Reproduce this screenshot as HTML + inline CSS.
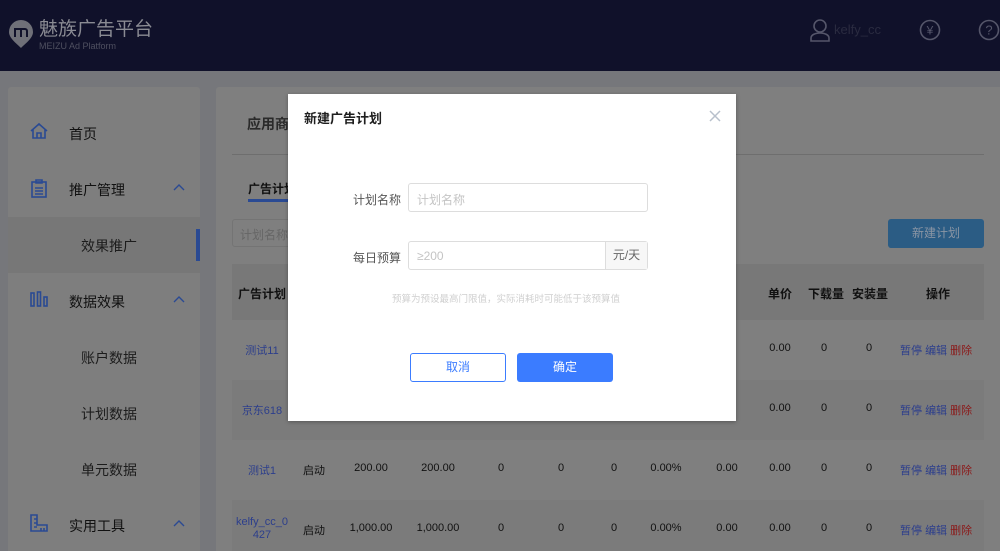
<!DOCTYPE html>
<html style="width:1000px;height:551px;overflow:hidden"><head><meta charset="utf-8"><style>
*{margin:0;padding:0;box-sizing:border-box}
body{width:1000px;height:551px;overflow:hidden;position:relative;background:#76777b;font-family:"Liberation Sans","Noto Sans CJK SC",sans-serif;color:#111}
.a{position:absolute}
.hdr{left:0;top:0;width:1000px;height:71px;background:#10112a}
.side{left:8px;top:87px;width:192px;height:464px;background:#7e7e7e;border-radius:3px 3px 0 0}
.main{left:216px;top:87px;width:784px;height:464px;background:#7f7f7f;border-radius:3px 0 0 0}
.nav{font-size:14px;color:#111}
.sub{font-size:14px;color:#1c1c1c}
.td{font-size:11px;color:#111;text-align:center;position:absolute}
.lk{color:#2c3e8c}
.modal{left:288px;top:94px;width:448px;height:327px;background:#fff;box-shadow:0 1px 4px rgba(0,0,0,.3)}
</style></head><body>
<div class="a hdr"></div>
<svg class="a" style="left:8px;top:19px" width="26" height="30" viewBox="0 0 26 30"><path d="M13 1a12 12 0 0 1 12 12c0 6-7 11-12 16C8 24 1 19 1 13A12 12 0 0 1 13 1z" fill="#6f7078"/><path d="M7 18v-8h10a2 2 0 0 1 2 2v6M13 10v8" stroke="#10112a" stroke-width="2" fill="none"/></svg>
<div class="a" style="left:39px;top:19px;font-size:19px;line-height:22px;color:#8a8b93">魅族广告平台</div>
<div class="a" style="left:39px;top:41px;font-size:9px;line-height:10px;color:#4f5060">MEIZU Ad Platform</div>
<svg class="a" style="left:809px;top:18px" width="22" height="24" viewBox="0 0 22 24" fill="none" stroke="#55566a" stroke-width="1.6"><circle cx="11" cy="8" r="6"/><path d="M2 23v-3c0-3 4-5 9-5s9 2 9 5v3z"/></svg>
<div class="a" style="left:834px;top:22px;font-size:13px;line-height:15px;color:#2a2b40">kelfy_cc</div>
<svg class="a" style="left:919px;top:19px" width="22" height="22"><circle cx="11" cy="11" r="9.5" fill="none" stroke="#55566a" stroke-width="1.6"/><text x="11" y="15.5" text-anchor="middle" font-size="12" fill="#55566a" font-family="Liberation Sans">¥</text></svg>
<svg class="a" style="left:978px;top:19px" width="22" height="22"><circle cx="11" cy="11" r="9.5" fill="none" stroke="#55566a" stroke-width="1.6"/><text x="11" y="15.5" text-anchor="middle" font-size="13" fill="#55566a" font-family="Liberation Sans">?</text></svg>

<div class="a side"></div>
<svg class="a" style="left:30px;top:122px" width="18" height="18" viewBox="0 0 18 18" fill="none" stroke="#2a4a93" stroke-width="1.6"><path d="M1 9L9 2l8 7M3 7v9h12V7M7 16v-5h4v5"/></svg>
<div class="a nav" style="left:69px;top:124px">首页</div>
<svg class="a" style="left:30px;top:179px" width="18" height="19" viewBox="0 0 18 19" fill="none" stroke="#2a4a93" stroke-width="1.6"><rect x="2" y="3" width="14" height="15"/><path d="M6 1h6v3H6zM5 9h8M5 12h8M5 15h8"/></svg>
<div class="a nav" style="left:69px;top:180px">推广管理</div>
<svg class="a" style="left:173px;top:184px" width="12" height="7" fill="none" stroke="#2a4a93" stroke-width="1.4"><path d="M1 6l5-5 5 5"/></svg>
<div class="a" style="left:8px;top:217px;width:192px;height:56px;background:#777"></div>
<div class="a" style="left:196px;top:229px;width:4px;height:32px;background:#2a4a93"></div>
<div class="a sub" style="left:81px;top:236px">效果推广</div>
<svg class="a" style="left:30px;top:291px" width="18" height="16" fill="none" stroke="#2a4a93" stroke-width="1.6"><rect x="1" y="2" width="3" height="13"/><rect x="7.5" y="1" width="3" height="14"/><rect x="14" y="6" width="3" height="9"/></svg>
<div class="a nav" style="left:69px;top:292px">数据效果</div>
<svg class="a" style="left:173px;top:296px" width="12" height="7" fill="none" stroke="#2a4a93" stroke-width="1.4"><path d="M1 6l5-5 5 5"/></svg>
<div class="a sub" style="left:81px;top:348px">账户数据</div>
<div class="a sub" style="left:81px;top:404px">计划数据</div>
<div class="a sub" style="left:81px;top:460px">单元数据</div>
<svg class="a" style="left:30px;top:514px" width="18" height="18" fill="none" stroke="#2a4a93" stroke-width="1.6"><path d="M1 1v16h16v-6H7V1zM4 5h3M4 9h3M4 13h3M11 14v3M14 14v3"/></svg>
<div class="a nav" style="left:69px;top:516px">实用工具</div>
<svg class="a" style="left:173px;top:520px" width="12" height="7" fill="none" stroke="#2a4a93" stroke-width="1.4"><path d="M1 6l5-5 5 5"/></svg>

<div class="a main"></div>
<div class="a" style="left:247px;top:114px;font-size:14px;font-weight:bold;color:#2a2a2a">应用商店</div>
<div class="a" style="left:232px;top:154px;width:752px;height:1px;background:#6e6e6e"></div>
<div class="a" style="left:248px;top:180px;font-size:12px;font-weight:bold">广告计划</div>
<div class="a" style="left:248px;top:199px;width:45px;height:3px;background:#2a4a93"></div>
<div class="a" style="left:232px;top:219px;width:80px;height:28px;border:1px solid #747474;border-radius:3px;font-size:12px;color:#666;padding:6px 7px">计划名称</div>
<div class="a" style="left:888px;top:219px;width:96px;height:29px;background:#2b5c84;border-radius:3px;color:#8a95a4;font-size:12px;text-align:center;line-height:29px">新建计划</div>
<div class="a" style="left:232px;top:264px;width:752px;height:56px;background:#787878"></div>
<div class="a" style="left:232px;top:380px;width:752px;height:60px;background:#7b7b7b"></div>
<div class="a" style="left:232px;top:500px;width:752px;height:51px;background:#7b7b7b"></div>
<div class="td" style="left:232px;top:285px;width:60px;font-weight:bold;font-size:12px">广告计划</div>
<div class="td" style="left:756px;top:285px;width:48px;font-weight:bold;font-size:12px">单价</div>
<div class="td" style="left:802px;top:285px;width:48px;font-weight:bold;font-size:12px">下载量</div>
<div class="td" style="left:846px;top:285px;width:48px;font-weight:bold;font-size:12px">安装量</div>
<div class="td" style="left:908px;top:285px;width:60px;font-weight:bold;font-size:12px">操作</div>

<div class="td lk" style="left:232px;top:342px;width:60px">测试11</div>
<div class="td lk" style="left:232px;top:402px;width:60px">京东618</div>
<div class="td lk" style="left:232px;top:462px;width:60px">测试1</div>
<div class="td lk" style="left:232px;top:516px;width:60px;line-height:13px">kelfy_cc_0<br>427</div>

<div class="td" style="left:296px;top:462px;width:36px">启动</div>
<div class="td" style="left:296px;top:522px;width:36px">启动</div>
<div class="td" style="left:345px;top:462px;width:52px">200.00</div>
<div class="td" style="left:345px;top:522px;width:52px">1,000.00</div>
<div class="td" style="left:412px;top:462px;width:52px">200.00</div>
<div class="td" style="left:412px;top:522px;width:52px">1,000.00</div>
<div class="td" style="left:490px;top:462px;width:22px">0</div><div class="td" style="left:490px;top:522px;width:22px">0</div>
<div class="td" style="left:550px;top:462px;width:22px">0</div><div class="td" style="left:550px;top:522px;width:22px">0</div>
<div class="td" style="left:603px;top:462px;width:22px">0</div><div class="td" style="left:603px;top:522px;width:22px">0</div>
<div class="td" style="left:644px;top:462px;width:44px">0.00%</div><div class="td" style="left:644px;top:522px;width:44px">0.00%</div>
<div class="td" style="left:707px;top:462px;width:40px">0.00</div><div class="td" style="left:707px;top:522px;width:40px">0.00</div>
<div class="td" style="left:760px;top:342px;width:40px">0.00</div><div class="td" style="left:760px;top:402px;width:40px">0.00</div><div class="td" style="left:760px;top:462px;width:40px">0.00</div><div class="td" style="left:760px;top:522px;width:40px">0.00</div>
<div class="td" style="left:814px;top:342px;width:20px">0</div><div class="td" style="left:814px;top:402px;width:20px">0</div><div class="td" style="left:814px;top:462px;width:20px">0</div><div class="td" style="left:814px;top:522px;width:20px">0</div>
<div class="td" style="left:859px;top:342px;width:20px">0</div><div class="td" style="left:859px;top:402px;width:20px">0</div><div class="td" style="left:859px;top:462px;width:20px">0</div><div class="td" style="left:859px;top:522px;width:20px">0</div>
<div class="td" style="left:900px;top:342px;width:80px;text-align:left"><span class="lk">暂停</span> <span class="lk">编辑</span> <span style="color:#8b1a1a">删除</span></div>
<div class="td" style="left:900px;top:402px;width:80px;text-align:left"><span class="lk">暂停</span> <span class="lk">编辑</span> <span style="color:#8b1a1a">删除</span></div>
<div class="td" style="left:900px;top:462px;width:80px;text-align:left"><span class="lk">暂停</span> <span class="lk">编辑</span> <span style="color:#8b1a1a">删除</span></div>
<div class="td" style="left:900px;top:522px;width:80px;text-align:left"><span class="lk">暂停</span> <span class="lk">编辑</span> <span style="color:#8b1a1a">删除</span></div>

<div class="a modal">
 <div class="a" style="left:16px;top:14px;font-size:13px;font-weight:bold;color:#1f1f1f">新建广告计划</div>
 <svg class="a" style="left:421px;top:16px" width="12" height="12" stroke="#b8c0cc" stroke-width="1.5"><path d="M1 1l10 10M11 1L1 11"/></svg>
 <div class="a" style="left:65px;top:97px;font-size:12px;color:#555">计划名称</div>
 <div class="a" style="left:120px;top:89px;width:240px;height:29px;border:1px solid #ddd;border-radius:3px;font-size:12px;color:#c4c4c4;padding:7px 8px">计划名称</div>
 <div class="a" style="left:65px;top:155px;font-size:12px;color:#555">每日预算</div>
 <div class="a" style="left:120px;top:147px;width:240px;height:29px;border:1px solid #ddd;border-radius:3px;font-size:12px;color:#c4c4c4;padding:7px 8px">≥200</div>
 <div class="a" style="left:317px;top:148px;width:42px;height:27px;background:#f7f7f7;border-left:1px solid #ddd;font-size:12px;color:#666;text-align:center;line-height:27px">元/天</div>
 <div class="a" style="left:104px;top:197px;font-size:9.5px;color:#d0d0d0">预算为预设最高门限值，实际消耗时可能低于该预算值</div>
 <div class="a" style="left:122px;top:259px;width:96px;height:29px;border:1px solid #3b7cff;border-radius:3px;font-size:12px;color:#3b7cff;text-align:center;line-height:27px">取消</div>
 <div class="a" style="left:229px;top:259px;width:96px;height:29px;background:#3b7cff;border-radius:3px;font-size:12px;color:#fff;text-align:center;line-height:29px">确定</div>
</div>
</body></html>
